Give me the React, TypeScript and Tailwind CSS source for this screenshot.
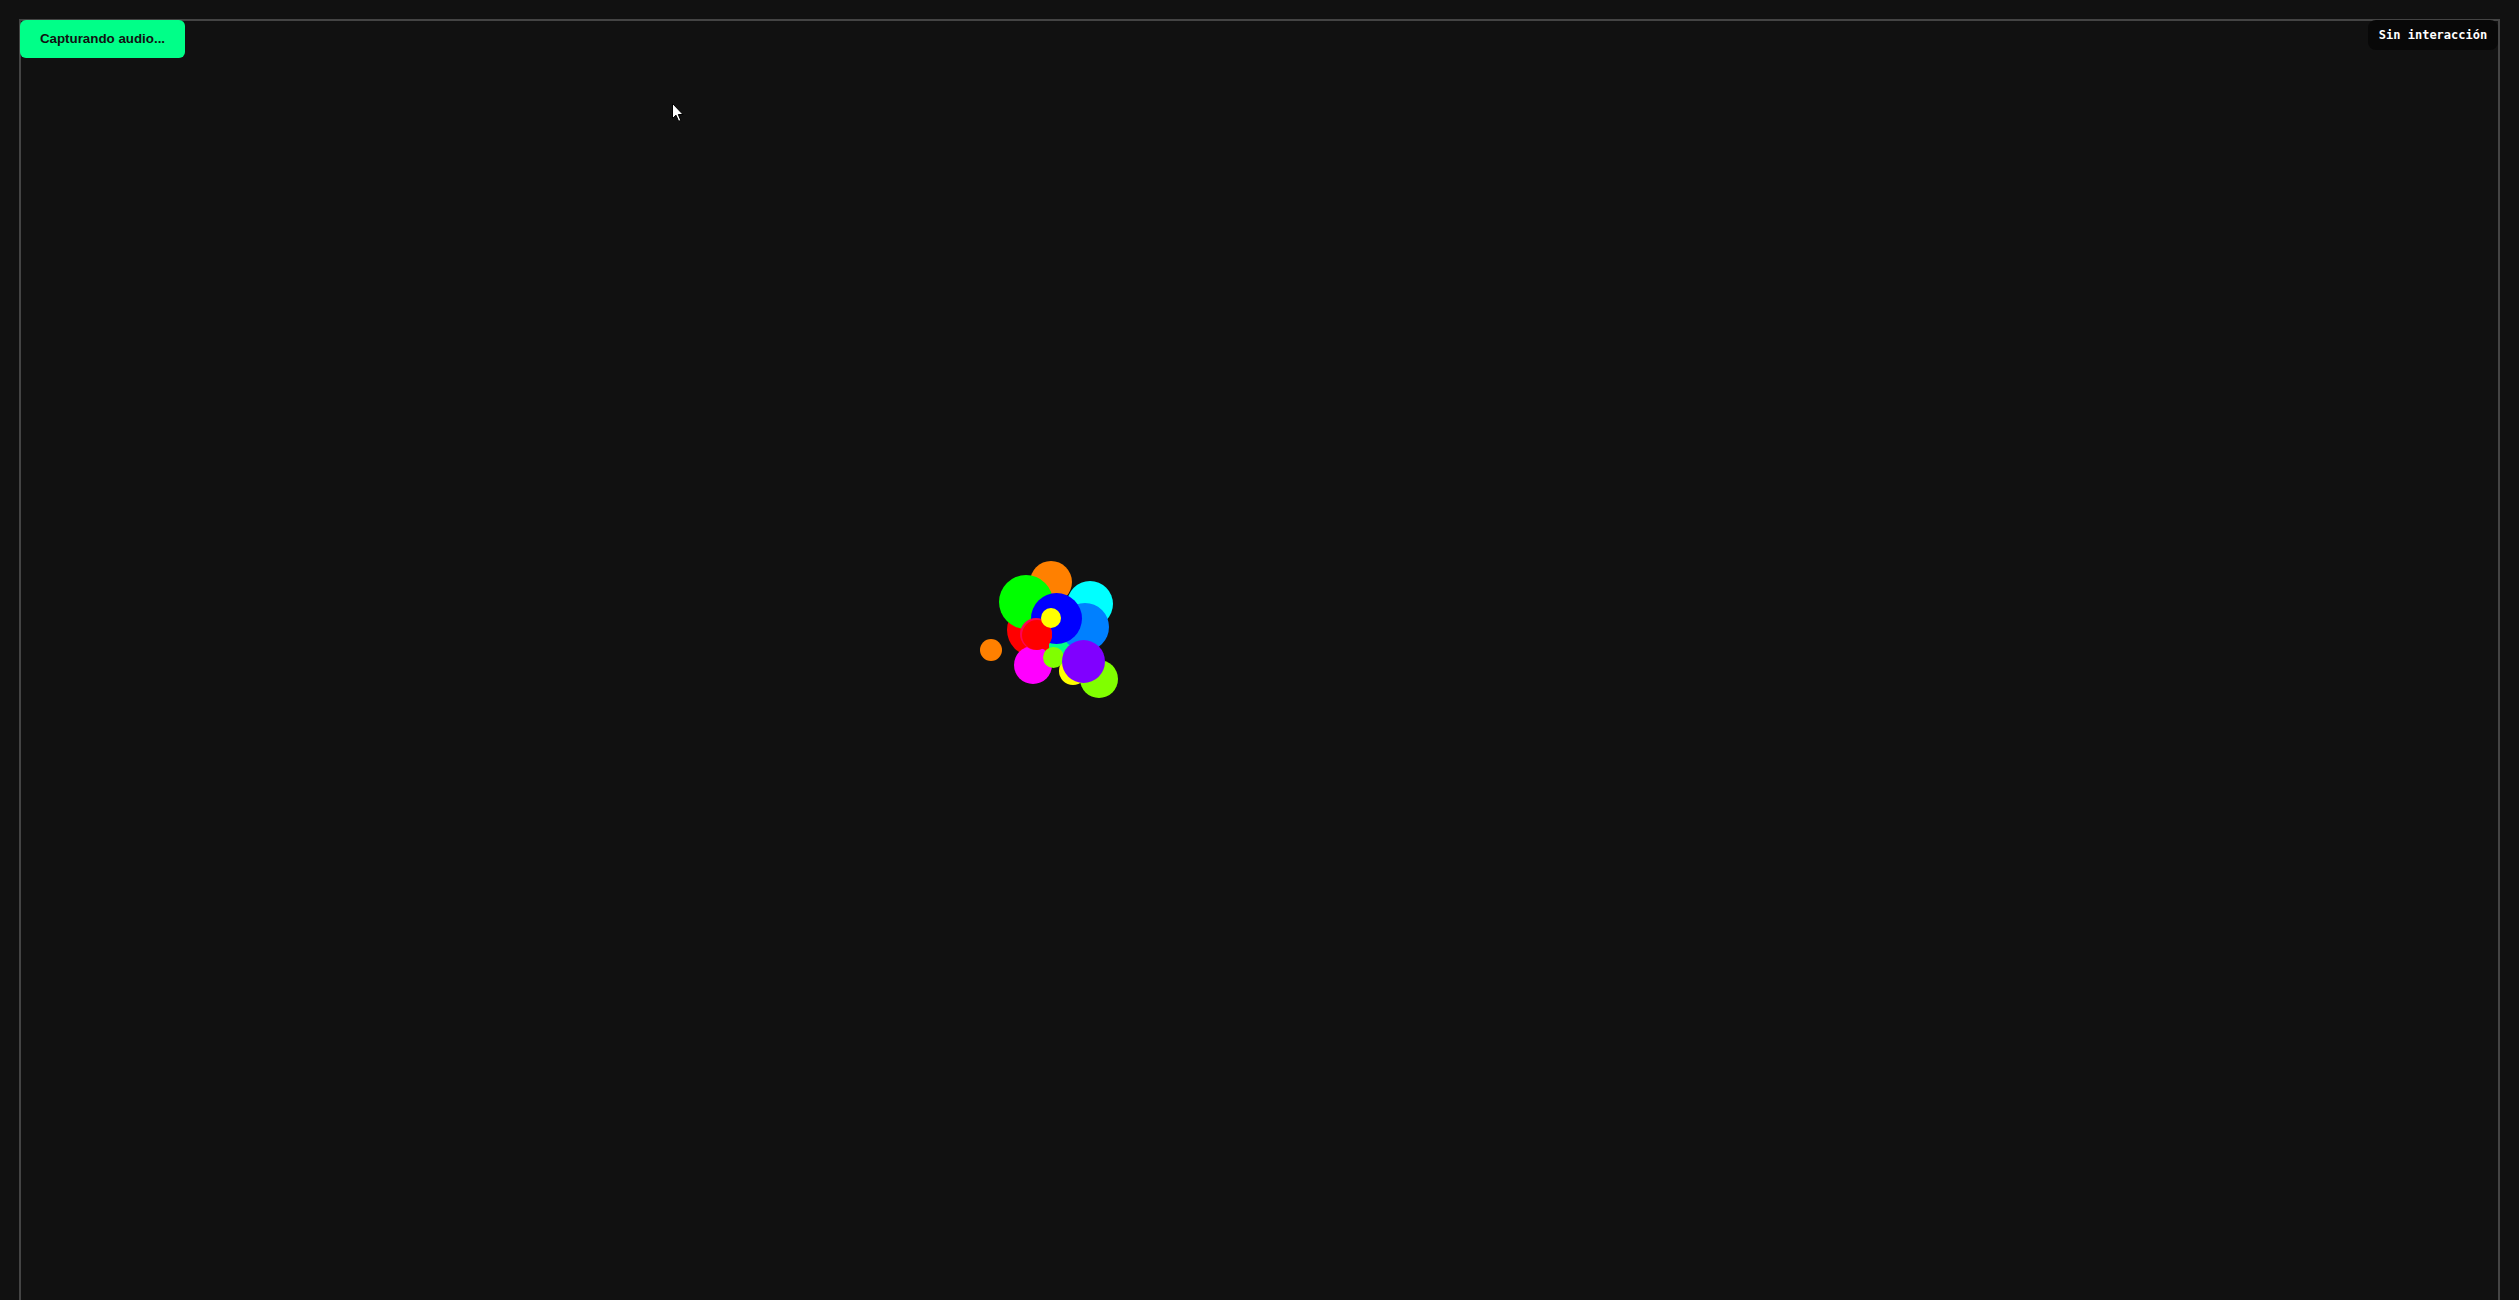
import React from "react";

type C = { x: number; y: number; r: number; c: string };

const circles: C[] = [
  { x: 1051, y: 582, r: 21, c: "#ff8000" },
  { x: 1090, y: 604, r: 23, c: "#00ffff" },
  { x: 1033, y: 630, r: 26, c: "#ff0000" },
  { x: 1026, y: 602, r: 27, c: "#00ff00" },
  { x: 1061, y: 646, r: 12, c: "#00ff88" },
  { x: 1085, y: 627, r: 24, c: "#0080ff" },
  { x: 1056.5, y: 618.5, r: 25.5, c: "#0000ff" },
  { x: 1033, y: 665, r: 19, c: "#ff00ff" },
  { x: 1036, y: 634, r: 16, c: "#ff0055" },
  { x: 1037, y: 635, r: 15, c: "#ff0000" },
  { x: 1051, y: 618, r: 10, c: "#ffff00" },
  { x: 1073, y: 671, r: 14, c: "#ffff00" },
  { x: 1099, y: 679, r: 19, c: "#80ff00" },
  { x: 1053.5, y: 657.5, r: 10.5, c: "#80ff00" },
  { x: 1083.5, y: 661.5, r: 21.5, c: "#8000ff" },
  { x: 990.5, y: 650, r: 11, c: "#ff8000" },
];

export default function App() {
  return (
    <div className="relative h-screen w-full overflow-hidden bg-[#111111]">
      <div className="mx-[19px] mt-[19px] h-[1300px] border-2 border-[#444444]" />
      {circles.map((k, i) => (
        <div
          key={i}
          className="absolute rounded-full"
          style={{
            left: k.x - k.r,
            top: k.y - k.r,
            width: k.r * 2,
            height: k.r * 2,
            background: k.c,
          }}
        />
      ))}
      <button className="absolute left-[20px] top-[20px] flex h-[38px] w-[165px] items-center justify-center rounded-[6px] bg-[#00ff88] font-['Liberation_Sans',Arial,sans-serif] text-[13.33px] font-bold text-[#111111]">
        Capturando audio...
      </button>
      <div className="absolute right-[21px] top-[20px] flex h-[30px] w-[130px] items-center justify-center rounded-[8px] bg-[#080808] font-['DejaVu_Sans_Mono',monospace] text-[12px] font-bold text-white">
        Sin interacción
      </div>
      <svg
        className="absolute left-[672px] top-[103px]"
        width="13"
        height="20"
        viewBox="0 0 13 20"
      >
        <path
          d="M0.5 0.5 L0.5 15.5 L4 12.2 L6.6 18.3 L8.8 17.4 L6.3 11.5 L11 11.5 Z"
          fill="#ffffff"
          stroke="#000000"
          strokeWidth="1"
        />
      </svg>
    </div>
  );
}
